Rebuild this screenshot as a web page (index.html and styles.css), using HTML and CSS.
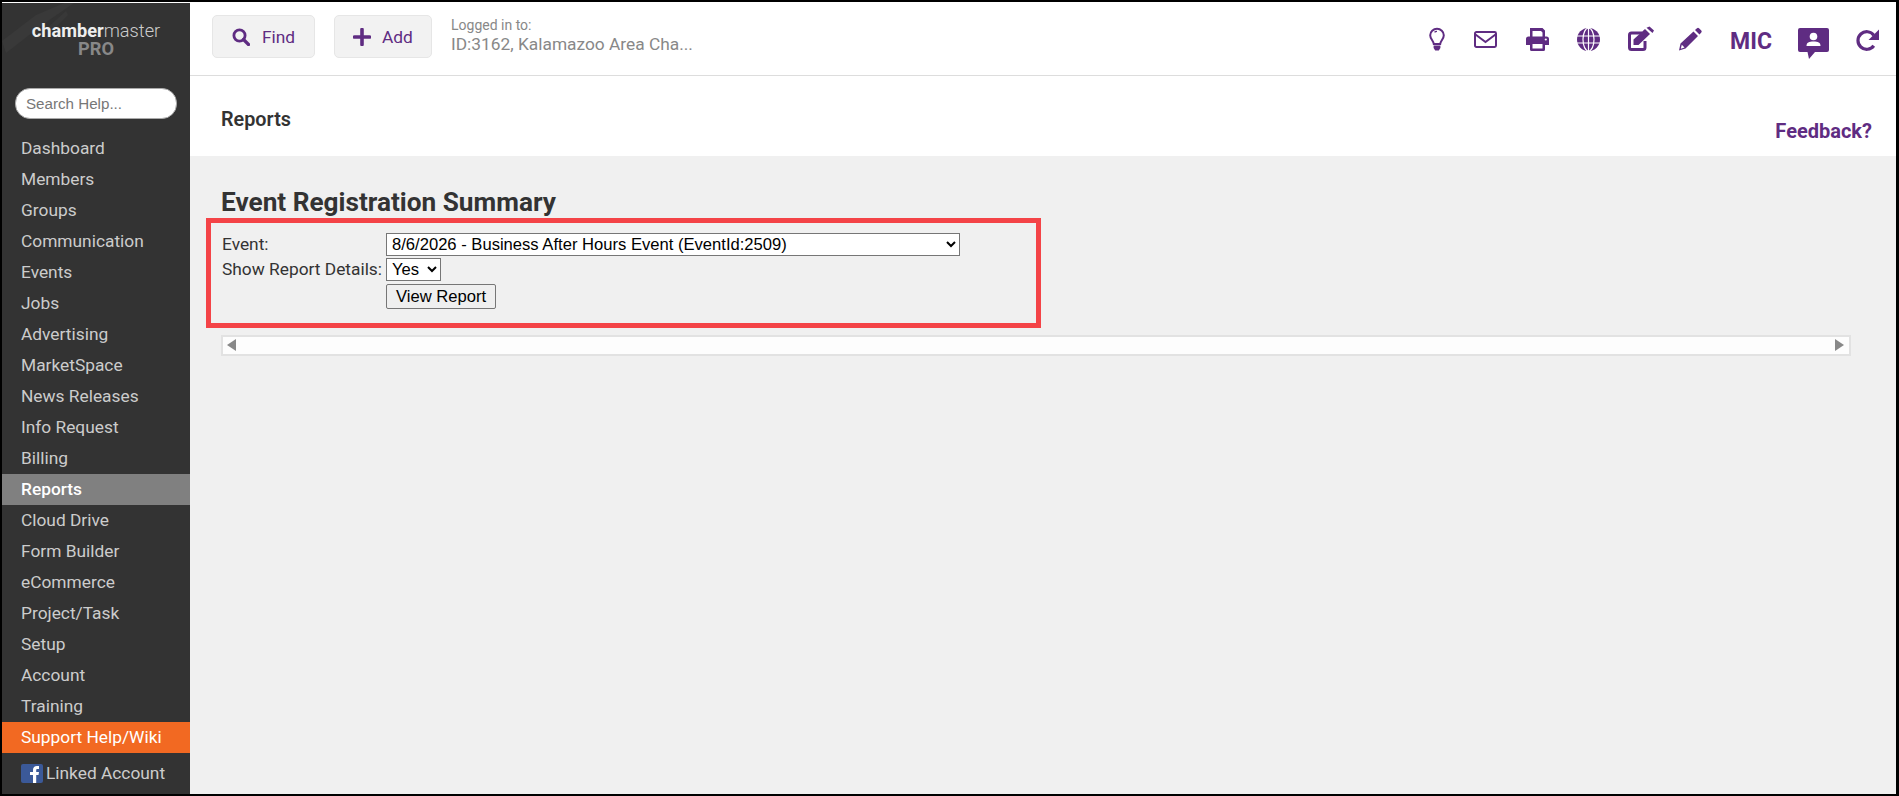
FILE: index.html
```html
<!DOCTYPE html>
<html lang="en">
<head>
<meta charset="utf-8">
<title>Event Registration Summary</title>
<link rel="stylesheet" href="styles.css">
</head>
<body>
<div class="frame">
  <aside class="sidebar">
    <svg class="texture" viewBox="0 0 188 60" width="188" height="60" aria-hidden="true">
      <path d="M0 38 L34 12 L62 0 L72 0 L40 22 L4 50 Z" fill="#393939"/>
      <path d="M44 26 L64 8 L66 12 L48 30 Z" fill="#383838"/>
    </svg>
    <div class="brand">
      <div class="brand-name"><b>chamber</b>master</div>
      <div class="brand-pro">PRO</div>
    </div>
    <div class="search"><input type="text" placeholder="Search Help..."></div>
    <nav class="nav">
      <a>Dashboard</a>
      <a>Members</a>
      <a>Groups</a>
      <a>Communication</a>
      <a>Events</a>
      <a>Jobs</a>
      <a>Advertising</a>
      <a>MarketSpace</a>
      <a>News Releases</a>
      <a>Info Request</a>
      <a>Billing</a>
      <a class="active">Reports</a>
      <a>Cloud Drive</a>
      <a>Form Builder</a>
      <a>eCommerce</a>
      <a>Project/Task</a>
      <a>Setup</a>
      <a>Account</a>
      <a>Training</a>
      <a class="support">Support Help/Wiki</a>
    </nav>
    <div class="linked">
      <svg class="fb" viewBox="0 0 22 19" width="22" height="19" aria-hidden="true">
        <rect width="22" height="19" rx="2" fill="#3b5998"/>
        <path d="M12 19 V11 H9 V8 H12 V6 C12 3.5 13.5 2 16 2 H18 V5 H16.5 C15.5 5 15.2 5.5 15.2 6.4 V8 H18 L17.5 11 H15.2 V19 Z" fill="#fff"/>
      </svg>
      <span>Linked Account</span>
    </div>
  </aside>

  <div class="main">
    <header class="topbar">
      <button class="tool tool-find">
        <svg viewBox="0 0 18 18" width="18" height="18" aria-hidden="true"><circle cx="7.5" cy="7.5" r="5.6" fill="none" stroke="currentColor" stroke-width="2.8"/><path d="M11.5 11.5 L16.5 16.5" stroke="currentColor" stroke-width="3.2" stroke-linecap="round"/></svg>
        <span>Find</span>
      </button>
      <button class="tool tool-add">
        <svg viewBox="0 0 18 18" width="18" height="18" aria-hidden="true"><path d="M9 1.5 V16.5 M1.5 9 H16.5" stroke="currentColor" stroke-width="3.6" stroke-linecap="round"/></svg>
        <span>Add</span>
      </button>
      <div class="login">
        <div class="login-label">Logged in to:</div>
        <div class="login-name">ID:3162, Kalamazoo Area Cha...</div>
      </div>
      <div class="actions">
        <svg class="ic-bulb" viewBox="0 0 16 23" width="16" height="23" aria-hidden="true">
          <path d="M4.8 16 C4.4 12.5 1.2 11 1.2 7.2 A6.8 6.4 0 0 1 14.8 7.2 C14.8 11 11.6 12.5 11.2 16 Z" fill="none" stroke="currentColor" stroke-width="2"/>
          <path d="M5.5 4.2 A4 4 0 0 1 8 3.4" fill="none" stroke="currentColor" stroke-width="1.4"/>
          <path d="M4.6 17.5 H11.4 V20 L9.8 22.5 H6.2 L4.6 20 Z" fill="currentColor"/>
        </svg>
        <svg class="ic-env" viewBox="0 0 23 17" width="23" height="17" aria-hidden="true">
          <rect x="1" y="1" width="21" height="15" rx="1.4" fill="none" stroke="currentColor" stroke-width="2"/>
          <path d="M1.5 3.5 L11.5 11 L21.5 3.5" fill="none" stroke="currentColor" stroke-width="2"/>
        </svg>
        <svg class="ic-print" viewBox="0 0 23 23" width="23" height="23" aria-hidden="true">
          <path d="M4 9 V0 H16.500 L19 2.500 V9 H16.500 V4.500 L15 3 H6.500 V9 Z" fill="currentColor"/>
          <path d="M2.500 8.500 H20.500 A2.500 2.500 0 0 1 23 11 V17 H19 V21.500 A1.500 1.500 0 0 1 17.500 23 H5.500 A1.500 1.500 0 0 1 4 21.500 V17 H0 V11 A2.500 2.500 0 0 1 2.500 8.500 Z M6.500 16 V20.500 H16.500 V16 Z" fill="currentColor" fill-rule="evenodd"/>
          <circle cx="19.800" cy="11.500" r="1.100" fill="#fff"/>
        </svg>
        <svg class="ic-globe" viewBox="0 0 23 23" width="23" height="23" aria-hidden="true">
          <circle cx="11.500" cy="11.500" r="11.500" fill="currentColor"/>
          <path d="M0 8 H23 M0 15 H23 M11.500 0 V23" stroke="#fff" stroke-width="1.200"/>
          <ellipse cx="11.500" cy="11.500" rx="5.500" ry="11.500" fill="none" stroke="#fff" stroke-width="1.200"/>
        </svg>
        <svg class="ic-edit" viewBox="0 0 26 23" width="26" height="23" aria-hidden="true">
          <path d="M14 5 H3.500 A2 2 0 0 0 1.500 7 V19.500 A2 2 0 0 0 3.500 21.500 H15 A2 2 0 0 0 17 19.500 V13" fill="none" stroke="currentColor" stroke-width="3"/>
          <path d="M5.500 11.500 L17 1 L22 6 L10.500 17 H5.500 Z" fill="currentColor"/>
          <path d="M18.500 -0.300 L21.500 -1.500 L26 2.500 L24.500 5 Z" fill="currentColor"/>
        </svg>
        <svg class="ic-pencil" viewBox="0 0 24 23" width="24" height="23" aria-hidden="true">
          <path d="M2.500 15.500 L15.500 3.500 L20 8 L7.500 20.500 L1 22.500 Z M3.800 16.800 L2.800 20.700 L6.500 19.500 Z" fill="currentColor" fill-rule="evenodd"/>
          <path d="M17 2 L19 0.300 A1.500 1.500 0 0 1 21 0.300 L23.300 2.600 A1.500 1.500 0 0 1 23.300 4.600 L21.500 6.500 Z" fill="currentColor"/>
        </svg>
        <span class="mic">MIC</span>
        <svg class="ic-chat" viewBox="0 0 31 31" width="31" height="31" aria-hidden="true">
          <path d="M2 0 H29 A2 2 0 0 1 31 2 V22 A2 2 0 0 1 29 24 H17 L11 31 L9.500 24 H2 A2 2 0 0 1 0 22 V2 A2 2 0 0 1 2 0 Z" fill="currentColor"/>
          <circle cx="15.500" cy="8.500" r="3.800" fill="#fff"/>
          <path d="M8.500 18 C8.500 14.500 11 13.500 15.500 13.500 C20 13.500 22.500 14.500 22.500 18 Z" fill="#fff"/>
        </svg>
        <svg class="ic-redo" viewBox="0 0 23 23" width="23" height="23" aria-hidden="true">
          <path d="M17.800 16.800 A8.800 8.800 0 1 1 17.800 6.200" fill="none" stroke="currentColor" stroke-width="3.200"/>
          <path d="M23 0.500 V11 H12.500 Z" fill="currentColor"/>
        </svg>
      </div>
    </header>

    <div class="pagebar">
      <div class="crumb">Reports</div>
      <a class="feedback">Feedback?</a>
    </div>

    <section class="content">
      <h1>Event Registration Summary</h1>
      <div class="annotated">
        <table class="form">
          <tr>
            <td>Event:</td>
            <td><select class="event"><option>8/6/2026 - Business After Hours Event (EventId:2509)</option></select></td>
          </tr>
          <tr>
            <td>Show Report Details:</td>
            <td><select class="yesno"><option>Yes</option></select></td>
          </tr>
          <tr>
            <td></td>
            <td><button class="view">View Report</button></td>
          </tr>
        </table>
        <div class="redbox"></div>
      </div>
      <div class="hscroll">
        <span class="arrow left"></span>
        <span class="arrow right"></span>
      </div>
    </section>
  </div>
</div>
</body>
</html>
```

FILE: styles.css
```css
* { box-sizing: border-box; }
html, body { margin: 0; height: 796px; overflow: hidden; background: #000; }
body { font-family: Roboto, "Liberation Sans", sans-serif; font-size: 17.33px; color: #333; }

.frame {
  display: flex;
  height: 796px;
  border-style: solid;
  border-color: #000;
  border-width: 2px 3px 2px 2px;
  background: #fff;
}

.sidebar {
  position: relative;
  flex: 0 0 188px;
  margin-top: 1px;
  background: #333;
  overflow: hidden;
}
.texture { position: absolute; left: 0; top: 0; }
.brand { position: relative; padding-top: 18px; height: 85px; text-align: center; }
.brand-name { font-size: 18.2px; line-height: 19px; color: #ccc; font-weight: 300; }
.brand-name b { font-weight: 700; color: #eee; }
.brand-pro { font-size: 18.2px; line-height: 18px; font-weight: 700; color: #888; }
.search { padding: 0 11px 0 13px; height: 45px; }
.search input {
  display: block;
  width: 162px;
  height: 31px;
  padding: 0 10px;
  border: 1px solid #aaa;
  border-radius: 15px;
  background: #fff;
  font-family: "Liberation Sans", sans-serif;
  font-size: 15.17px;
}
.search input::placeholder { color: #777; opacity: 1; }
.nav a {
  display: block;
  height: 31px;
  padding-left: 19px;
  line-height: 31px;
  color: #ccc;
}
.nav a.active { background: #808080; color: #fff; font-weight: 500; }
.nav a.support { background: #f26922; color: #fff; }
.linked { display: flex; align-items: center; gap: 3px; padding: 10px 0 0 19px; color: #ccc; }
.fb { flex: none; }

.main { flex: 1; display: flex; flex-direction: column; min-width: 0; }

.topbar {
  display: flex;
  align-items: flex-start;
  flex: 0 0 74px;
  padding: 13px 17px 0 22px;
  border-bottom: 1px solid #ddd;
}
.tool {
  display: flex;
  align-items: center;
  gap: 12px;
  height: 43px;
  margin-right: 19px;
  border: 1px solid #e6e6e6;
  border-radius: 5px;
  background: #f2f2f2;
  color: #5f2c82;
  font-family: Roboto, sans-serif;
  font-size: 17.33px;
}
.tool-find { width: 103px; padding: 0 0 0 19px; }
.tool-add { width: 98px; padding: 0 0 0 18px; gap: 11px; }
.login { padding-top: 2px; color: #888; }
.login-label { font-size: 14px; line-height: 16px; }
.login-name { font-size: 17.33px; line-height: 22px; }
.actions {
  display: flex;
  align-items: flex-start;
  gap: 29px;
  margin-left: auto;
  padding-top: 13px;
  color: #5f2c82;
}
.actions svg { display: block; overflow: visible; flex: none; }
.ic-env { margin-top: 3px; }
.ic-globe { margin-left: -1px; }
.ic-edit { margin-left: -1px; }
.ic-pencil { margin-left: -5px; }
.mic { font-size: 23px; line-height: 27px; font-weight: 700; margin-left: -1px; }
.ic-chat { margin-left: -3px; }
.ic-redo { margin-left: -2px; margin-top: 1px; }

.pagebar {
  display: flex;
  justify-content: space-between;
  flex: 0 0 80px;
  padding: 0 24px 0 31px;
  background: #fff;
}
.crumb { margin-top: 33px; font-size: 19.8px; line-height: 22px; font-weight: 600; }
.feedback { margin-top: 44px; font-size: 20px; line-height: 22px; font-weight: 700; color: #5f2c82; }

.content { flex: 1; padding: 30px 45px 0 31px; background: #f0f0f0; }
h1 { margin: 0 0 1px; font-size: 26.2px; line-height: 32px; font-weight: 700; color: #333; }

.annotated { position: relative; height: 116px; padding-top: 14px; }
.redbox {
  position: absolute;
  left: -15px;
  top: -1px;
  width: 835px;
  height: 110px;
  border: 5px solid #f44347;
}
.form { border-collapse: collapse; }
.form td { padding: 0 0 2px; vertical-align: top; line-height: 23px; }
.form td:first-child { padding-left: 1px; padding-right: 4px; }
select, .view { font-family: "Liberation Sans", sans-serif; font-size: 16.6px; color: #000; display: block; }
select { height: 23px; padding: 0 0 0 1px; border: 1px solid #767676; background: #fff; }
.event { width: 574px; }
.yesno { width: 55px; }
.view {
  width: 110px;
  height: 25px;
  margin-top: 1px;
  padding: 0;
  border: 1px solid #767676;
  border-radius: 2px;
  background: #efefef;
}

.hscroll {
  position: relative;
  height: 21px;
  border: 2px solid #e2e2e2;
  background: #fdfdfd;
}
.arrow {
  position: absolute;
  top: 2px;
  width: 0;
  height: 0;
  border-top: 6.5px solid transparent;
  border-bottom: 6.5px solid transparent;
}
.arrow.left { left: 4px; border-right: 9px solid #888; }
.arrow.right { right: 5px; border-left: 9px solid #888; }
```
